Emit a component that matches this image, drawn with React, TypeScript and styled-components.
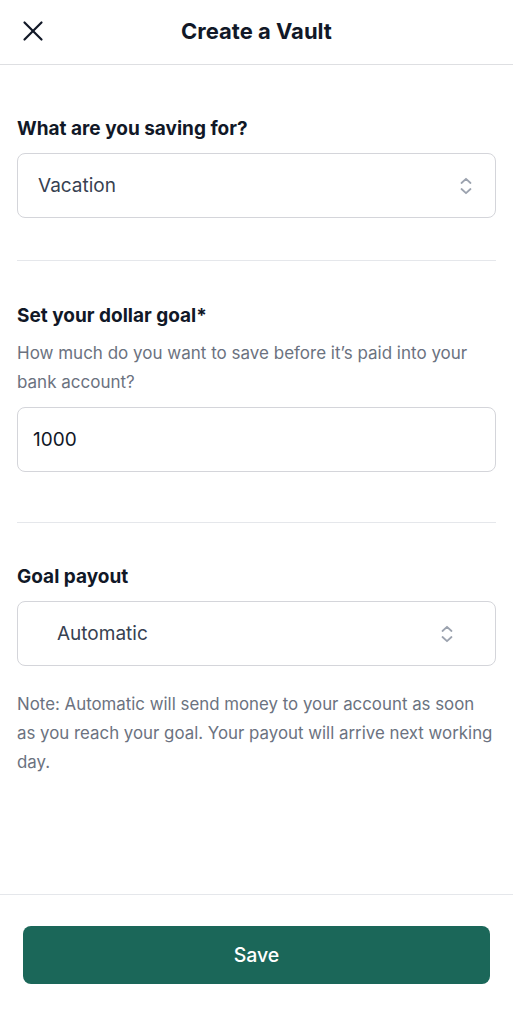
import React from "react";
import styled, { createGlobalStyle } from "styled-components";

const Global = createGlobalStyle`
  * { box-sizing: border-box; }
  html, body { margin: 0; padding: 0; background: #ffffff; }
  body { font-family: Inter, "Noto Sans", Arial, sans-serif; color: #111827; -webkit-font-smoothing: antialiased; }
`;

const Page = styled.div`
  height: 1009px;
  display: flex;
  flex-direction: column;
  background: #fff;
`;

const Header = styled.header`
  height: 65px;
  flex: none;
  display: grid;
  grid-template-columns: 1fr auto 1fr;
  align-items: center;
  padding: 0 21px;
  border-bottom: 1px solid #dedfe2;
`;

const CloseButton = styled.button`
  justify-self: start;
  width: 24px;
  height: 24px;
  padding: 0;
  margin-top: -2px;
  border: none;
  background: none;
  display: flex;
  align-items: center;
  justify-content: center;
  color: #111827;
`;

const Title = styled.h1`
  margin: 0;
  margin-top: -3px;
  font-size: 22px;
  font-weight: 700;
  color: #111827;
`;

const Main = styled.main`
  flex: 1;
  padding: 52px 17px 0;
  display: flex;
  flex-direction: column;
`;

const Section = styled.section<{ $pt?: number; $pb?: number }>`
  display: flex;
  flex-direction: column;
  padding-top: ${(p) => p.$pt ?? 0}px;
  padding-bottom: ${(p) => p.$pb ?? 0}px;
`;

const Label = styled.label`
  font-size: 19px;
  line-height: 24px;
  font-weight: 700;
  color: #111827;
`;

const Help = styled.p<{ $mt: number; $size?: number }>`
  margin: ${(p) => p.$mt}px 0 0;
  font-size: ${(p) => p.$size ?? 17}px;
  line-height: 29px;
  color: #6b7280;
`;

const Field = styled.div<{ $mt: number; $pl: number; $pr: number }>`
  margin-top: ${(p) => p.$mt}px;
  height: 65px;
  border: 1px solid #d4d5da;
  border-radius: 8px;
  display: flex;
  align-items: center;
  justify-content: space-between;
  padding: 0 ${(p) => p.$pr}px 0 ${(p) => p.$pl}px;
  background: #fff;
`;

const FieldText = styled.span<{ $dark?: boolean }>`
  font-size: 19px;
  color: ${(p) => (p.$dark ? "#111827" : "#374151")};
`;

const Divider = styled.hr`
  margin: 0;
  border: none;
  border-top: 1px solid #e5e7eb;
`;

const Footer = styled.footer`
  flex: none;
  border-top: 1px solid #e5e7eb;
  padding: 31px 23px 25px;
`;

const SaveButton = styled.button`
  width: 100%;
  height: 58px;
  border: none;
  border-radius: 8px;
  background: #1b6759;
  color: #ffffff;
  font-family: inherit;
  font-size: 19.5px;
  font-weight: 500;
`;

const Chevrons = () => (
  <svg width="12" height="20" viewBox="0 0 12 20" fill="none" stroke="#9ca3af" strokeWidth="1.8" strokeLinecap="round" strokeLinejoin="round">
    <path d="M1.5 7 L6 2.8 L10.5 7" />
    <path d="M1.5 13 L6 17.2 L10.5 13" />
  </svg>
);

const CloseIcon = () => (
  <svg width="22" height="22" viewBox="0 0 22 22" fill="none" stroke="currentColor" strokeWidth="2.2" strokeLinecap="round">
    <path d="M2.5 2.5 L19.5 19.5" />
    <path d="M19.5 2.5 L2.5 19.5" />
  </svg>
);

export default function App() {
  return (
    <>
      <Global />
      <Page>
        <Header>
          <CloseButton aria-label="Close">
            <CloseIcon />
          </CloseButton>
          <Title>Create a Vault</Title>
          <span />
        </Header>
        <Main>
          <Section $pb={42}>
            <Label>What are you saving for?</Label>
            <Field $mt={12} $pl={20} $pr={23}>
              <FieldText>Vacation</FieldText>
              <Chevrons />
            </Field>
          </Section>
          <Divider />
          <Section $pt={43} $pb={50}>
            <Label>Set your dollar goal*</Label>
            <Help $mt={11}>How much do you want to save before it’s paid into your bank account?</Help>
            <Field $mt={10} $pl={15} $pr={23}>
              <FieldText $dark>1000</FieldText>
            </Field>
          </Section>
          <Divider />
          <Section $pt={42}>
            <Label>Goal payout</Label>
            <Field $mt={12} $pl={39} $pr={42}>
              <FieldText>Automatic</FieldText>
              <Chevrons />
            </Field>
            <Help $mt={24} $size={16.85}>
              Note: Automatic will send money to your account as soon as you reach your goal. Your payout will arrive next working day.
            </Help>
          </Section>
        </Main>
        <Footer>
          <SaveButton>Save</SaveButton>
        </Footer>
      </Page>
    </>
  );
}
